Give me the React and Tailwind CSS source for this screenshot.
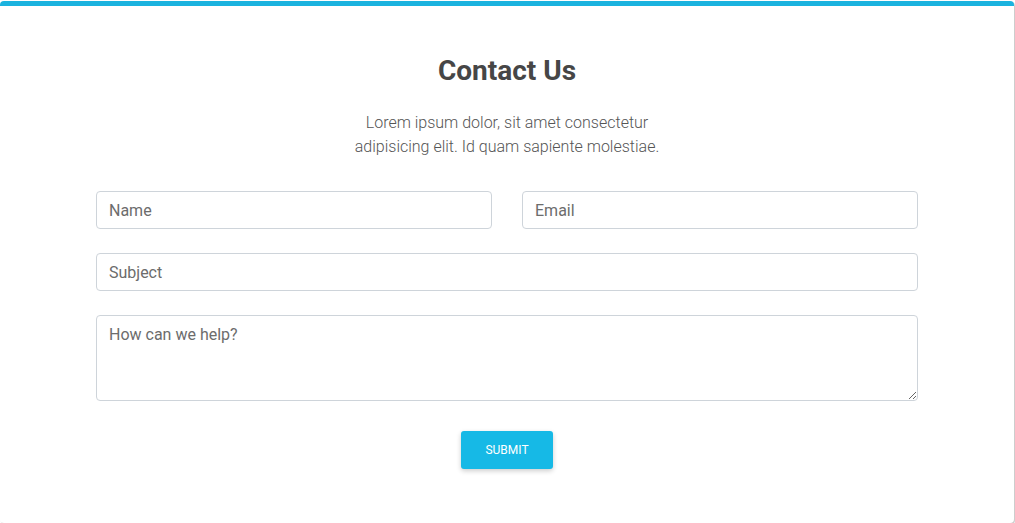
export default function App() {
    const field = 'w-full h-[38px] rounded-[4px] border border-[#ced4da] bg-white px-3 text-[16px] text-[#495057] placeholder:text-[#6c6c6c] outline-none';

    return (
        <div className="min-h-[523px] bg-white font-['Roboto',sans-serif] pt-px">
            <div className="w-[1014px] h-[522px] rounded-[4px] border-t-[5px] border-[#1bb3df] bg-white shadow-[1px_1px_1px_rgba(0,0,0,0.22)] pt-[48px]">
                <h2 className="text-center text-[28px] leading-[34px] font-bold text-[#464646]">Contact Us</h2>

                <p className="mt-[23px] text-center text-[16px] leading-[24px] font-light text-[#555]">
                    Lorem ipsum dolor, sit amet consectetur
                    <br />
                    adipisicing elit. Id quam sapiente molestiae.
                </p>

                <form className="mx-auto mt-[32px] w-[822px] flex flex-col gap-[24px]" onSubmit={(e) => e.preventDefault()}>
                    <div className="grid grid-cols-2 gap-[30px]">
                        <input type="text" placeholder="Name" className={field} />
                        <input type="email" placeholder="Email" className={field} />
                    </div>

                    <input type="text" placeholder="Subject" className={field} />

                    <textarea
                        placeholder="How can we help?"
                        className="block w-full h-[86px] rounded-[4px] border border-[#ced4da] bg-white px-3 py-[7px] text-[16px] leading-[24px] text-[#495057] placeholder:text-[#6c6c6c] outline-none"
                    />

                    <div className="flex justify-center pt-[6px]">
                        <button
                            type="submit"
                            className="w-[92px] h-[38px] rounded-[3px] bg-[#16b9e6] text-[12px] uppercase text-white shadow-[0_2px_5px_rgba(0,0,0,0.2)]"
                        >
                            Submit
                        </button>
                    </div>
                </form>
            </div>
        </div>
    );
}
